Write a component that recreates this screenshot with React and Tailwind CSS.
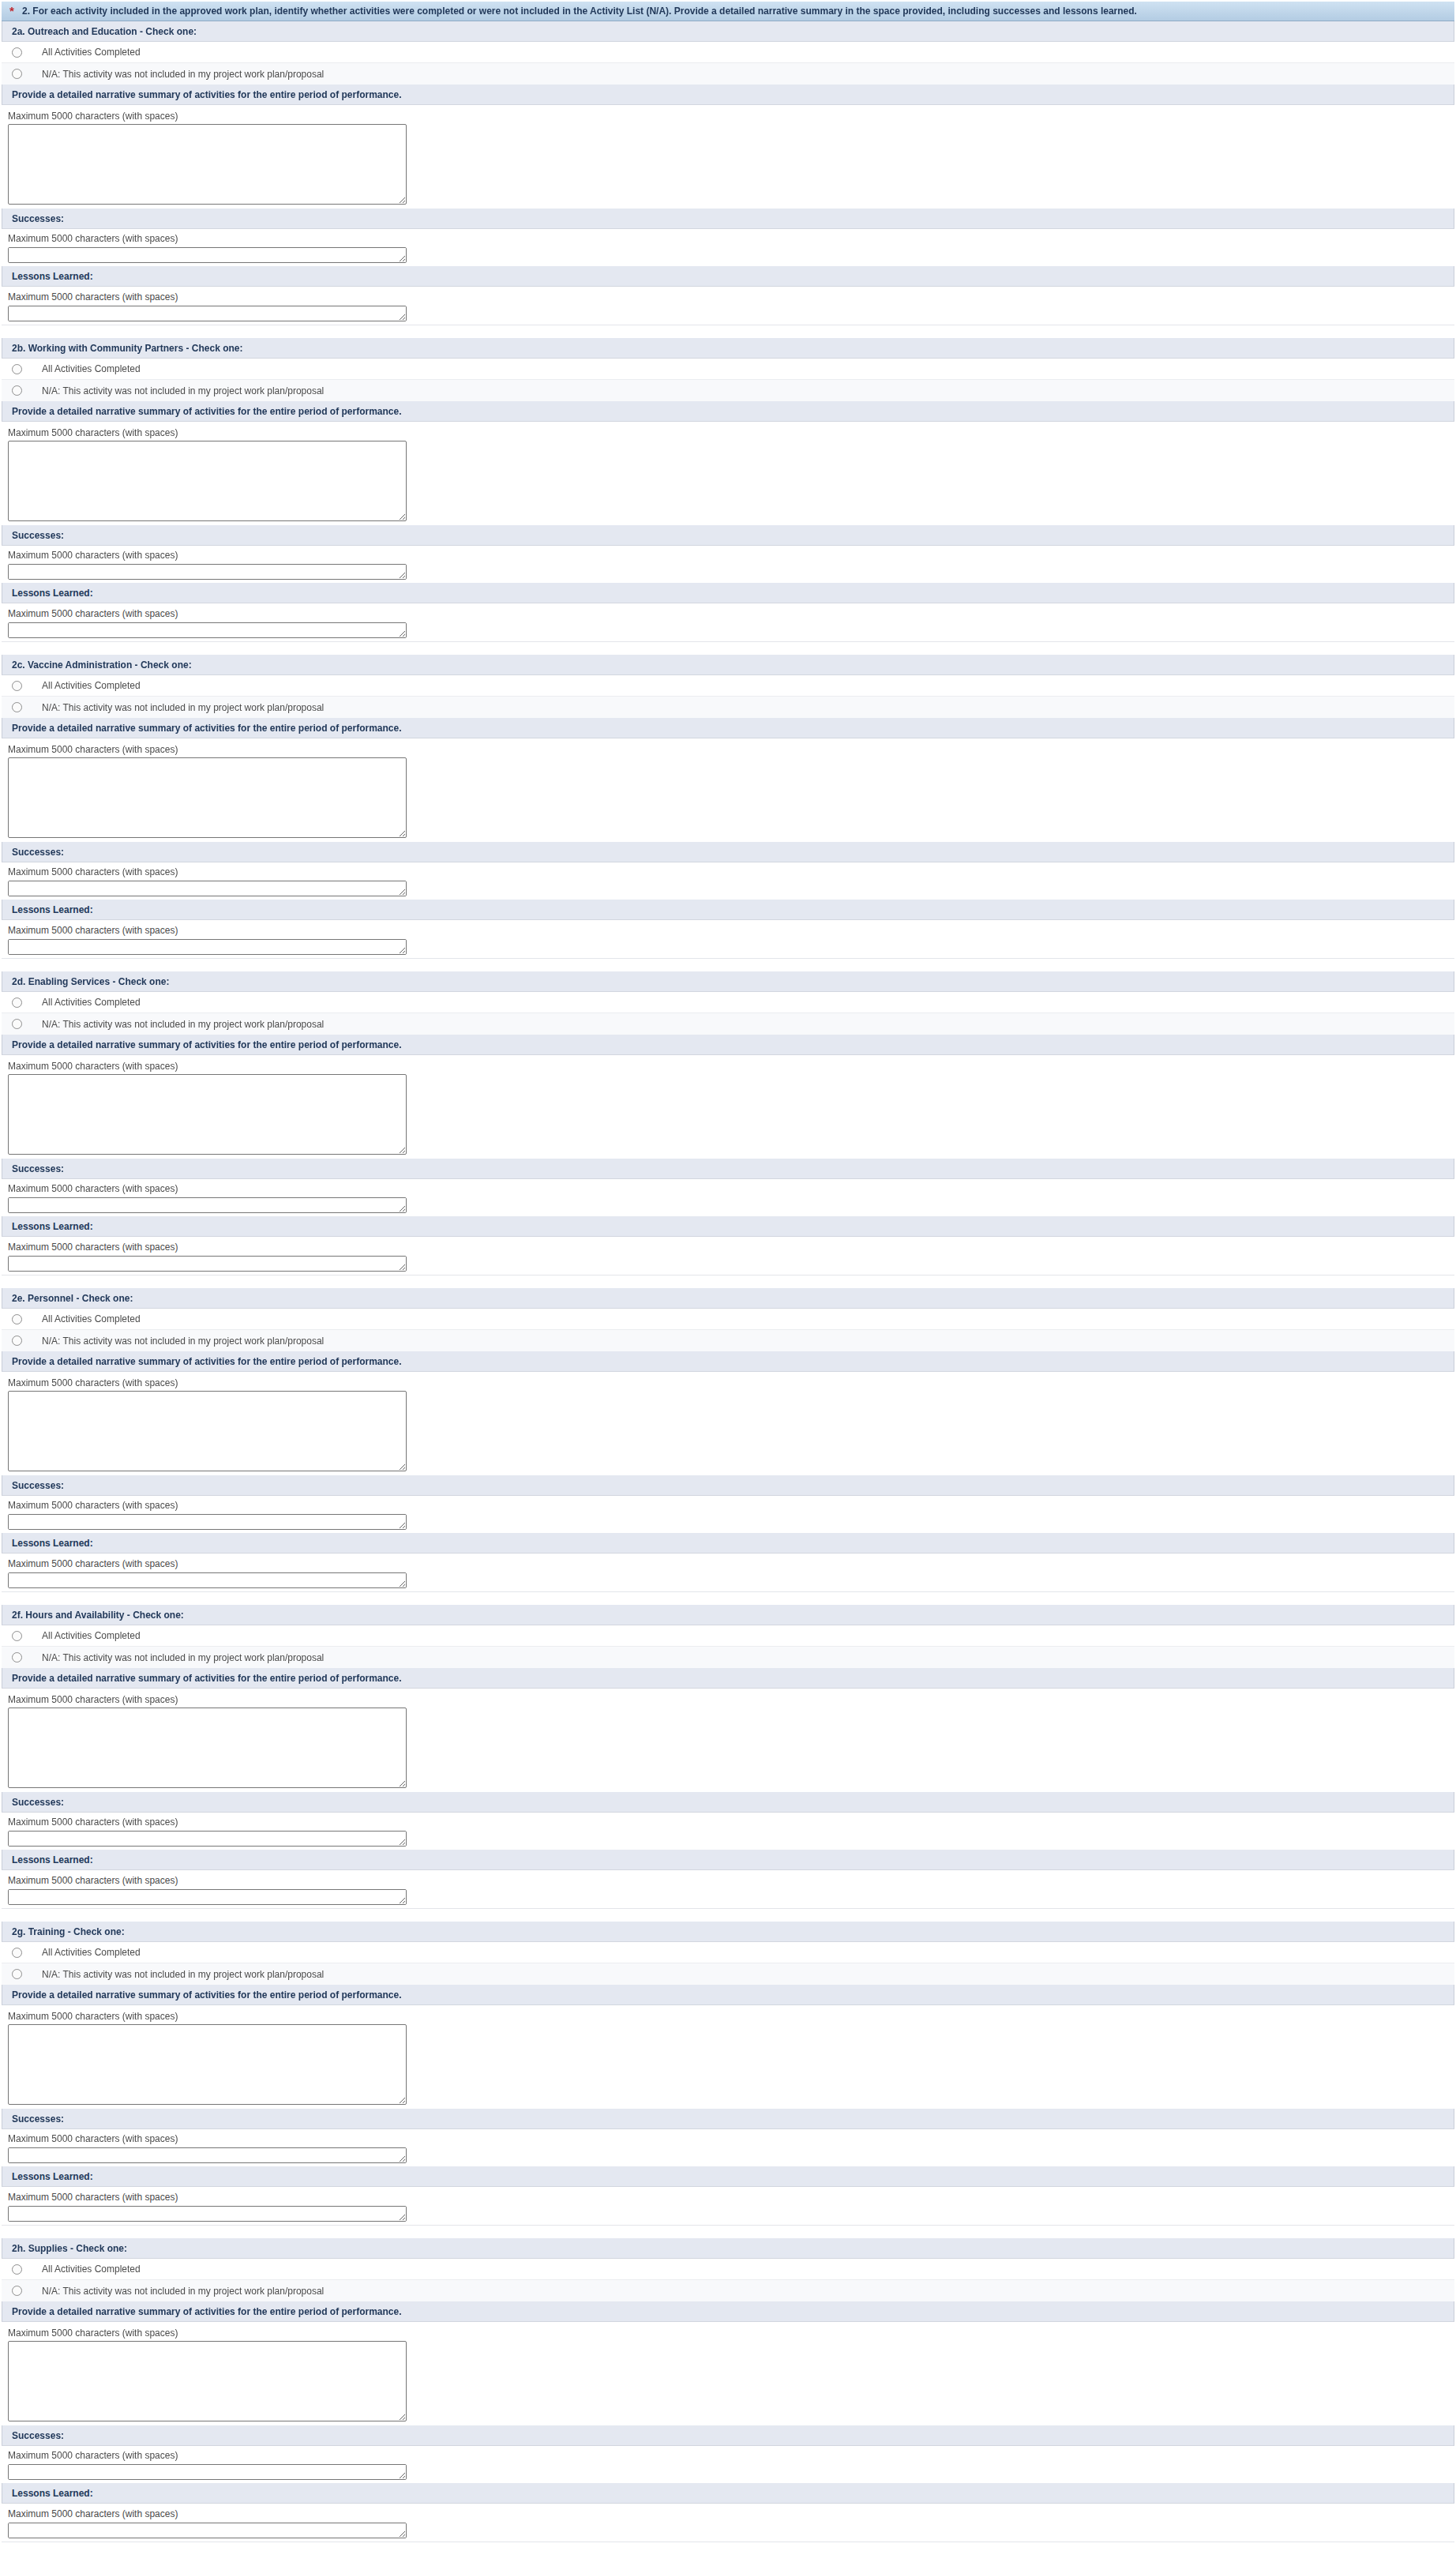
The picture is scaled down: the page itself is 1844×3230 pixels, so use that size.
import React from "react";

const activities = [
  "2a. Outreach and Education",
  "2b. Working with Community Partners",
  "2c. Vaccine Administration",
  "2d. Enabling Services",
  "2e. Personnel",
  "2f. Hours and Availability",
  "2g. Training",
  "2h. Supplies",
];

const font = { fontFamily: '"Liberation Sans", Arial, sans-serif' };

const Bar = ({ children }) => (
  <div className="h-[26px] flex items-center pl-[12px] bg-[#e4e8f1] border-l border-r border-b border-l-[#c9ced9] border-r-[#c9ced9] border-b-[#d2d6df] text-[12px] font-bold text-[#22395a]">
    {children}
  </div>
);

const Field = ({ tall, last }) => (
  <div
    className={
      "pl-[8px] pb-[4px] " +
      (tall ? "pt-[7px] pb-[5px] " : "pt-[5px] ") +
      (last ? "border-b border-[#e3e5ea] pt-[6px]" : "")
    }
  >
    <div className="text-[12px] leading-[14px] text-[#4a4a4a]">
      Maximum 5000 characters (with spaces)
    </div>
    <textarea
      className={
        "block w-[505px] border border-[#767676] rounded-[2px] bg-white " +
        (tall ? "h-[102px] mt-[3px]" : "h-[20px] mt-[4px]")
      }
    />
  </div>
);

const Option = ({ name, label, shaded }) => (
  <label
    className={
      "h-[27px] flex items-center " +
      (shaded ? "bg-[#f8f9fb]" : "bg-white border-b border-[#ebedf0]")
    }
  >
    <input
      type="radio"
      name={name}
      className="appearance-none m-0 ml-[13px] w-[13px] h-[13px] rounded-full border border-[#8c8c8c] bg-[#fbfbfb]"
    />
    <span className="ml-[25px] text-[12px] text-[#4a4a4a]">{label}</span>
  </label>
);

const Section = ({ title, idx }) => (
  <div className={idx > 0 ? "mt-[16px]" : ""}>
    <Bar>{title} - Check one:</Bar>
    <Option name={"act" + idx} label="All Activities Completed" />
    <Option
      name={"act" + idx}
      label="N/A: This activity was not included in my project work plan/proposal"
      shaded
    />
    <Bar>Provide a detailed narrative summary of activities for the entire period of performance.</Bar>
    <Field tall />
    <Bar>Successes:</Bar>
    <Field />
    <Bar>Lessons Learned:</Bar>
    <Field last />
  </div>
);

export default function App() {
  return (
    <div className="bg-white min-h-[3230px] pt-[2px] px-[2px]" style={font}>
      <div className="h-[25px] flex items-center bg-gradient-to-b from-[#cfe2f2] to-[#b3cce3] border-b border-[#8fabc6] text-[12px] font-bold text-[#22395a]">
        <span className="ml-[10px] w-[16px] text-[#c0262c] text-[15px] leading-none -mt-[2px]">*</span>
        <span>
          2. For each activity included in the approved work plan, identify whether activities were completed or were not included in the Activity List (N/A). Provide a detailed narrative summary in the space provided, including successes and lessons learned.
        </span>
      </div>
      {activities.map((a, i) => (
        <Section key={a} title={a} idx={i} />
      ))}
    </div>
  );
}
